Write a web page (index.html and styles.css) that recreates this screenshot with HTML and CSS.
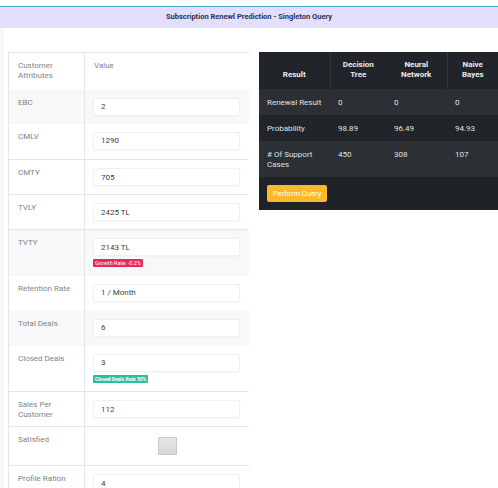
FILE: index.html
```html
<!DOCTYPE html>
<html lang="en">
<head>
    <meta charset="UTF-8">
    <meta name="viewport" content="width=device-width, initial-scale=1.0">
    <title>Subscription Renewl Prediction</title>
    <link rel="stylesheet" href="styles.css">
</head>
<body>
    <div class="top-gap"></div>
    <div class="page-title">Subscription Renewl Prediction - Singleton Query</div>

    <div class="page">
        <div class="side-strip"></div>
        <div class="content">
            <div class="attr-wrap">
                <table class="attr-table">
                    <tr class="head-row">
                        <td class="label">Customer Attributes</td>
                        <td class="label">Value</td>
                    </tr>
                    <tr class="shaded h34">
                        <td class="label">EBC</td>
                        <td><input class="field" type="text" value="2"></td>
                    </tr>
                    <tr class="h36">
                        <td class="label">CMLV</td>
                        <td><input class="field" type="text" value="1290"></td>
                    </tr>
                    <tr class="lined">
                        <td class="label">CMTY</td>
                        <td><input class="field" type="text" value="705"></td>
                    </tr>
                    <tr class="lined">
                        <td class="label">TVLY</td>
                        <td><input class="field" type="text" value="2425 TL"></td>
                    </tr>
                    <tr class="lined shaded tall">
                        <td class="label">TVTY</td>
                        <td>
                            <input class="field" type="text" value="2143 TL">
                            <span class="badge badge-red">Growth Rate: -0.2%</span>
                        </td>
                    </tr>
                    <tr>
                        <td class="label">Retention Rate</td>
                        <td><input class="field" type="text" value="1 / Month"></td>
                    </tr>
                    <tr class="shaded">
                        <td class="label">Total Deals</td>
                        <td><input class="field" type="text" value="6"></td>
                    </tr>
                    <tr class="tall">
                        <td class="label">Closed Deals</td>
                        <td>
                            <input class="field" type="text" value="3">
                            <span class="badge badge-green">Closed Deals Rate 50%</span>
                        </td>
                    </tr>
                    <tr class="lined">
                        <td class="label">Sales Per Customer</td>
                        <td><input class="field" type="text" value="112"></td>
                    </tr>
                    <tr class="lined h39">
                        <td class="label">Satisfied</td>
                        <td class="center"><span class="check-box"></span></td>
                    </tr>
                    <tr class="lined">
                        <td class="label">Profile Ration</td>
                        <td><input class="field" type="text" value="4"></td>
                    </tr>
                </table>
            </div>

            <div class="result-box">
                <table class="result-table">
                    <tr class="result-head">
                        <th class="col-result">Result</th>
                        <th class="col-dt split">Decision Tree</th>
                        <th class="col-nn">Neural Network</th>
                        <th class="col-nb split">Naive Bayes</th>
                    </tr>
                    <tr class="alt">
                        <td>Renewal Result</td>
                        <td>0</td>
                        <td>0</td>
                        <td>0</td>
                    </tr>
                    <tr>
                        <td>Probability</td>
                        <td>98.89</td>
                        <td>96.49</td>
                        <td>94.93</td>
                    </tr>
                    <tr class="alt">
                        <td># Of Support Cases</td>
                        <td>450</td>
                        <td>308</td>
                        <td>107</td>
                    </tr>
                </table>
                <div class="result-foot">
                    <button class="query-button">Perform Query</button>
                </div>
            </div>
        </div>
    </div>
</body>
</html>
```

FILE: styles.css
```css
* {
    box-sizing: border-box;
}
body {
    margin: 0;
    font-family: Roboto, "Liberation Sans", Arial, sans-serif;
    font-size: 8px;
    background: white;
    color: #6c757d;
}
.top-gap {
    height: 6px;
}
.page-title {
    height: 22px;
    line-height: 20px;
    border-top: 1px solid #4d9fd8;
    background: #e3dffa;
    color: #2a2f5a;
    font-weight: bold;
    font-size: 7.5px;
    text-align: center;
}
.page {
    display: flex;
}
.side-strip {
    width: 5px;
    background: #f6f6f6;
    min-height: 460px;
}
.content {
    display: flex;
    align-items: flex-start;
    padding-top: 24px;
    padding-left: 4px;
}
.attr-wrap {
    width: 241px;
    overflow: hidden;
}
.attr-table {
    width: 241px;
    border-collapse: collapse;
    table-layout: fixed;
}
.attr-table tr {
    height: 35px;
}
.attr-table tr.h34 {
    height: 34px;
}
.attr-table tr.h36 {
    height: 36px;
}
.attr-table tr.h39 {
    height: 39px;
}
.attr-table tr.tall {
    height: 46px;
}
.attr-table td {
    vertical-align: top;
    padding: 8px 0 0 8px;
    border-left: 1px solid #e3e5e8;
}
.attr-table td.label {
    width: 76px;
    padding: 8px 4px 0 9px;
    line-height: 10px;
    color: #7d848b;
}
.attr-table tr.head-row {
    height: 37px;
}
.attr-table .head-row td {
    border-top: 1px solid #e3e5e8;
    padding-top: 8px;
}
.attr-table .head-row td + td {
    width: auto;
}
.attr-table tr.shaded {
    background: #f7f8fa;
}
.attr-table tr.lined td {
    border-top: 1px solid #e3e5e8;
}
.attr-table td.center {
    text-align: center;
    padding-left: 0;
    padding-top: 10px;
}
.field {
    display: block;
    width: 147px;
    height: 18px;
    border: 1px solid #eef0f2;
    border-radius: 2px;
    background: white;
    padding: 0 7px;
    font-family: inherit;
    font-size: 8px;
    color: #3a4046;
    box-shadow: 0 1px 2px rgba(0,0,0,0.03);
}
.badge {
    display: inline-block;
    margin-top: 3px;
    padding: 0 2px;
    height: 8px;
    line-height: 8px;
    font-size: 5.5px;
    color: white;
    border-radius: 1px;
    vertical-align: top;
}
.badge-red {
    background: #e8295c;
}
.badge-green {
    background: #2cbf9a;
    font-weight: bold;
    font-size: 5px;
}
.check-box {
    display: inline-block;
    width: 19px;
    height: 18px;
    border: 1px solid #c9c9c9;
    border-radius: 1px;
    background: linear-gradient(#e6e6e6, #d8d8d8);
    vertical-align: top;
}
.result-box {
    margin-left: 10px;
    width: 239px;
    background: #212529;
}
.result-table {
    width: 239px;
    border-collapse: collapse;
    table-layout: fixed;
    color: #dfe2e5;
}
.result-head th {
    height: 37px;
    vertical-align: bottom;
    padding: 0 4px 9px;
    font-weight: bold;
    color: #e9ecef;
    line-height: 10px;
    text-align: center;
}
.result-head th.split {
    border-left: 1px solid #32383e;
}
.col-result {
    width: 71px;
}
.col-dt {
    width: 56px;
}
.col-nn {
    width: 61px;
}
.result-table td {
    vertical-align: top;
    padding: 9px 4px 7px 8px;
    line-height: 10px;
}
.result-table tr.alt {
    background: #2c3034;
}
.result-foot {
    height: 33px;
    padding: 8px 8px;
    background: #1f2327;
}
.query-button {
    display: block;
    width: 60px;
    height: 17px;
    border: none;
    border-radius: 2px;
    background: #fab92b;
    color: white;
    font-family: inherit;
    font-size: 7.5px;
    padding: 0;
}
```
